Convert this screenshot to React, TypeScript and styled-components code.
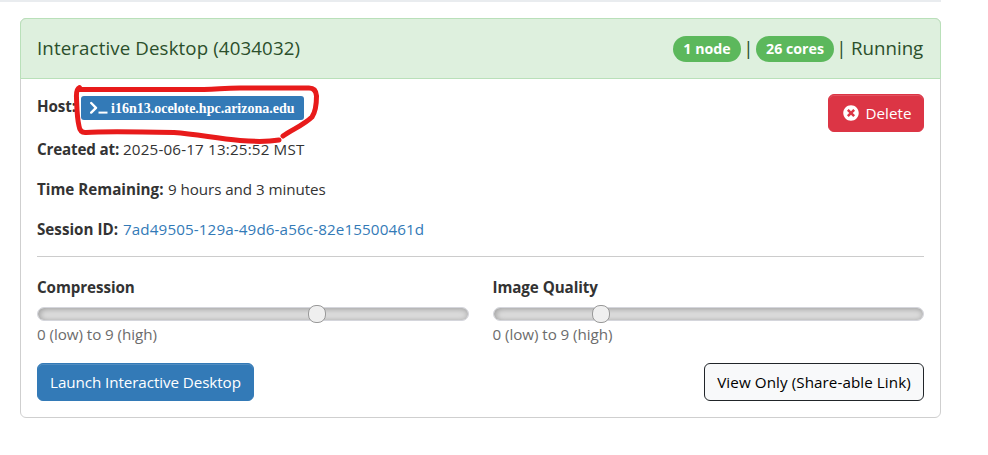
import React from "react";
import styled, { createGlobalStyle } from "styled-components";
import { FaTimesCircle } from "react-icons/fa";

const GlobalStyle = createGlobalStyle`
  *, *::before, *::after { box-sizing: border-box; }
  body {
    margin: 0;
    background: #fff;
    color: #333;
    font: 15.2px/24px "Open Sans", "Noto Sans", sans-serif;
    overflow: hidden;
  }
`;

const Page = styled.main`
  position: relative;
  width: 941px;
  height: 455px;
`;

const TopRule = styled.div`
  height: 2px;
  background: #e9ecef;
`;

const Card = styled.section`
  margin: 16px 0 0 20px;
  height: 400px;
  border: 1px solid #cfcfcf;
  border-radius: 6px;
`;

const CardHeader = styled.header`
  display: flex;
  justify-content: space-between;
  align-items: center;
  height: 61px;
  margin: -1px -1px 0;
  padding: 0 16px;
  border: 1px solid #b9e0b9;
  border-radius: 6px 6px 0 0;
  background: #def0de;
  color: #2b4f2b;
  font-size: 18.7px;
  white-space: nowrap;
`;

const Title = styled.h1`
  margin: 0;
  padding-bottom: 2px;
  font-size: inherit;
  font-weight: 400;
  letter-spacing: 0.12px;
`;

const Status = styled.div`
  display: flex;
  align-items: center;
`;

const Pill = styled.span<{ $width: number }>`
  width: ${(p) => p.$width}px;
  height: 26px;
  border-radius: 13px;
  background: #5cb85c;
  color: #fff;
  font-size: 14.2px;
  font-weight: 700;
  line-height: 26px;
  text-align: center;
`;

const Bar = styled.span`
  width: 15px;
  padding-bottom: 2px;
  text-align: center;
`;

const Running = styled.span`
  width: 73px;
  margin-left: 2px;
  padding-bottom: 2px;
`;

const CardBody = styled.div`
  padding: 15px 16px 0;
`;

const Summary = styled.div`
  display: flex;
  justify-content: space-between;
  align-items: flex-start;
  height: 162px;
`;

const Details = styled.div`
  display: flex;
  flex-direction: column;
  gap: 16px;
`;

const Detail = styled.div<{ $host?: boolean }>`
  display: flex;
  align-items: flex-start;
  height: ${(p) => (p.$host ? 27 : 24)}px;
  white-space: nowrap;
`;

const Term = styled.strong<{ $width: number; $spacing?: number }>`
  width: ${(p) => p.$width}px;
  font-weight: 700;
  letter-spacing: ${(p) => p.$spacing ?? 0}px;
`;

const Value = styled.span<{ $spacing?: number }>`
  letter-spacing: ${(p) => p.$spacing ?? 0}px;
`;

const SessionLink = styled.a`
  color: #337ab7;
  text-decoration: none;
  letter-spacing: 0.12px;
`;

const HostBadge = styled.a`
  display: flex;
  align-items: center;
  width: 223px;
  height: 24px;
  margin-top: 2px;
  padding-left: 9px;
  border-radius: 3px;
  background: #337ab7;
  color: #fff;
  font: 700 14px/24px "Liberation Serif", serif;
  svg { margin-right: 3px; }
`;

const HostName = styled.span`
  padding-top: 1px;
`;

const Button = styled.button<{ $kind: "primary" | "danger" | "outline"; $width: number; $spacing?: number }>`
  display: flex;
  align-items: center;
  justify-content: center;
  gap: 7px;
  width: ${(p) => p.$width}px;
  height: 38px;
  padding: 0 0 0 ${(p) => (p.$kind === "danger" ? 2 : 0)}px;
  border: 1px solid ${(p) => ({ primary: "#337ab7", danger: "#dc3545", outline: "#212529" })[p.$kind]};
  border-radius: 6px;
  background: ${(p) => ({ primary: "#337ab7", danger: "#dc3545", outline: "#f8f9fa" })[p.$kind]};
  color: ${(p) => (p.$kind === "outline" ? "#000" : "#fff")};
  box-shadow: ${(p) => (p.$kind === "outline" ? "none" : "inset 0 1px 0 rgba(255, 255, 255, 0.15)")};
  font: inherit;
  letter-spacing: ${(p) => p.$spacing ?? 0}px;
  white-space: nowrap;
`;

const Divider = styled.hr`
  height: 1px;
  margin: 0 0 18px;
  border: 0;
  background: #ccc;
`;

const Sliders = styled.div`
  display: grid;
  grid-template-columns: 1fr 1fr;
  gap: 24px;
`;

const Label = styled.label`
  display: block;
  font-weight: 700;
  letter-spacing: -0.08px;
`;

const Range = styled.input`
  appearance: none;
  display: block;
  width: 100%;
  height: 14px;
  margin: 8px 0 1px;
  border: 1px solid #d5d6dc;
  border-radius: 8px;
  background: #dedede;
  box-shadow: inset 1px 1px 6px #999;
  &::-webkit-slider-thumb {
    appearance: none;
    width: 18px;
    height: 18px;
    border: 1px solid #999;
    border-radius: 8px;
    background: #efefef;
  }
`;

const Hint = styled.div`
  color: #6c6c6c;
  letter-spacing: -0.06px;
`;

const Actions = styled.div`
  display: flex;
  justify-content: space-between;
  margin-top: 17px;
`;

const Annotation = styled.svg`
  position: absolute;
  left: 70px;
  top: 80px;
  pointer-events: none;
`;

function PromptIcon() {
  return (
    <svg width="18" height="14" viewBox="0 0 18 14" fill="none" stroke="#fff" strokeLinejoin="round">
      <path d="M1.2 2 6 6.8 1.2 11.6" strokeWidth="2.4" strokeLinecap="round" />
      <path d="M8.5 11.6H17.5" strokeWidth="2" />
    </svg>
  );
}

function Slider({ label, value }: { label: string; value: number }) {
  return (
    <div>
      <Label>{label}</Label>
      <Range type="range" min={0} max={9} step="any" defaultValue={value} aria-label={label} />
      <Hint>0 (low) to 9 (high)</Hint>
    </div>
  );
}

export default function App() {
  return (
    <Page>
      <GlobalStyle />
      <TopRule />
      <Card>
        <CardHeader>
          <Title>Interactive Desktop (4034032)</Title>
          <Status>
            <Pill $width={68}>1 node</Pill>
            <Bar>|</Bar>
            <Pill $width={78}>26 cores</Pill>
            <Bar>|</Bar>
            <Running>Running</Running>
          </Status>
        </CardHeader>
        <CardBody>
          <Summary>
            <Details>
              <Detail $host>
                <Term $width={44} $spacing={-0.1}>Host:</Term>
                <HostBadge>
                  <PromptIcon />
                  <HostName>i16n13.ocelote.hpc.arizona.edu</HostName>
                </HostBadge>
              </Detail>
              <Detail>
                <Term $width={86} $spacing={-0.17}>Created at:</Term>
                <Value $spacing={0.17}>2025-06-17 13:25:52 MST</Value>
              </Detail>
              <Detail>
                <Term $width={131}>Time Remaining:</Term>
                <Value $spacing={-0.07}>9 hours and 3 minutes</Value>
              </Detail>
              <Detail>
                <Term $width={86}>Session ID:</Term>
                <SessionLink>7ad49505-129a-49d6-a56c-82e15500461d</SessionLink>
              </Detail>
            </Details>
            <Button $kind="danger" $width={96}>
              <FaTimesCircle size={16} />
              Delete
            </Button>
          </Summary>
          <Divider />
          <Sliders>
            <Slider label="Compression" value={5.9} />
            <Slider label="Image Quality" value={2.15} />
          </Sliders>
          <Actions>
            <Button $kind="primary" $width={217} $spacing={-0.08}>Launch Interactive Desktop</Button>
            <Button $kind="outline" $width={220} $spacing={0.08}>View Only (Share-able Link)</Button>
          </Actions>
        </CardBody>
      </Card>
      <Annotation width="252" height="64" viewBox="70 80 252 64" fill="none" stroke="#e81b1b" strokeWidth="5" strokeLinecap="round" strokeLinejoin="round">
        <path d="M79.500 87.500Q76 89 76.500 98C77 111 77 118 79 126Q80 133 86 132.500C104 131 128 131.500 174 132.500C196 134 214 138 240 140.500Q264 142.500 279 140" />
        <path d="M79 89.500H204C220 89 224 88 240 88H309Q316 88 316.500 96C316.500 105 316 111 312 117C304 125 291 130 283 136" />
      </Annotation>
    </Page>
  );
}
